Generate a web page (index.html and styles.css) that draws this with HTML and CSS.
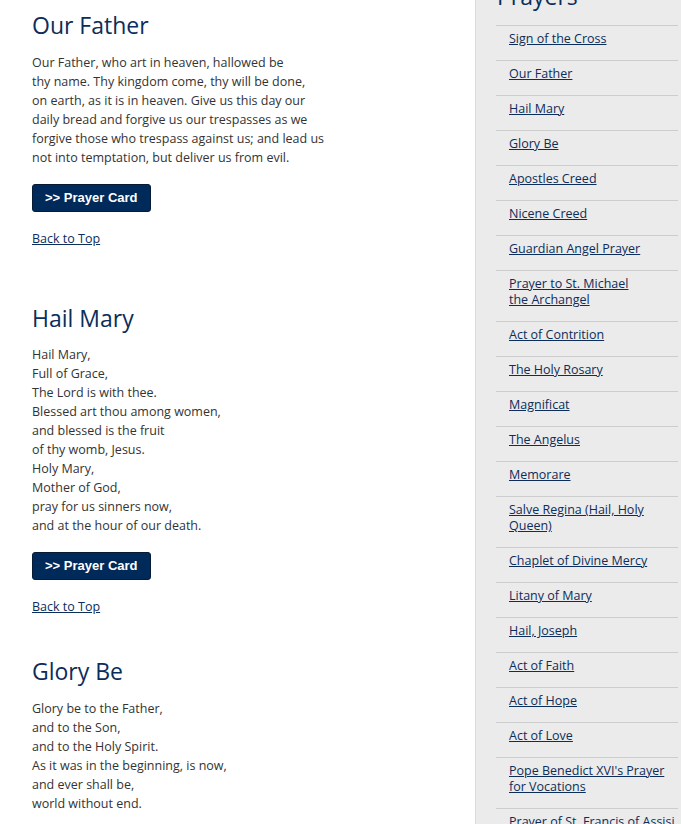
FILE: index.html
```html
<!DOCTYPE html>
<html lang="en">
<head>
  <meta charset="UTF-8">
  <title>Prayers</title>
  <link rel="stylesheet" href="styles.css">
</head>
<body>
  <div class="page">
    <div class="content">

      <div class="prayer" id="our-father">
        <h2>Our Father</h2>
        <p>Our Father, who art in heaven, hallowed be<br>
        thy name. Thy kingdom come, thy will be done,<br>
        on earth, as it is in heaven. Give us this day our<br>
        daily bread and forgive us our trespasses as we<br>
        forgive those who trespass against us; and lead us<br>
        not into temptation, but deliver us from evil.</p>
        <a class="card-btn" href="#">&gt;&gt; Prayer Card</a>
        <p class="top-link"><a href="#">Back to Top</a></p>
      </div>

      <div class="prayer prayer-wide" id="hail-mary">
        <h2>Hail Mary</h2>
        <p>Hail Mary,<br>
        Full of Grace,<br>
        The Lord is with thee.<br>
        Blessed art thou among women,<br>
        and blessed is the fruit<br>
        of thy womb, Jesus.<br>
        Holy Mary,<br>
        Mother of God,<br>
        pray for us sinners now,<br>
        and at the hour of our death.</p>
        <a class="card-btn" href="#">&gt;&gt; Prayer Card</a>
        <p class="top-link"><a href="#">Back to Top</a></p>
      </div>

      <div class="prayer" id="glory-be">
        <h2>Glory Be</h2>
        <p>Glory be to the Father,<br>
        and to the Son,<br>
        and to the Holy Spirit.<br>
        As it was in the beginning, is now,<br>
        and ever shall be,<br>
        world without end.</p>
      </div>

    </div>

    <div class="sidebar">
      <h3>Prayers</h3>
      <ul class="prayer-list">
        <li><a href="#">Sign of the Cross</a></li>
        <li><a href="#">Our Father</a></li>
        <li><a href="#">Hail Mary</a></li>
        <li><a href="#">Glory Be</a></li>
        <li><a href="#">Apostles Creed</a></li>
        <li><a href="#">Nicene Creed</a></li>
        <li><a href="#">Guardian Angel Prayer</a></li>
        <li><a href="#">Prayer to St. Michael<br>the Archangel</a></li>
        <li><a href="#">Act of Contrition</a></li>
        <li><a href="#">The Holy Rosary</a></li>
        <li><a href="#">Magnificat</a></li>
        <li><a href="#">The Angelus</a></li>
        <li><a href="#">Memorare</a></li>
        <li><a href="#">Salve Regina (Hail, Holy Queen)</a></li>
        <li><a href="#">Chaplet of Divine Mercy</a></li>
        <li><a href="#">Litany of Mary</a></li>
        <li><a href="#">Hail, Joseph</a></li>
        <li><a href="#">Act of Faith</a></li>
        <li><a href="#">Act of Hope</a></li>
        <li><a href="#">Act of Love</a></li>
        <li><a href="#">Pope Benedict XVI's Prayer for Vocations</a></li>
        <li><a href="#">Prayer of St. Francis of Assisi</a></li>
      </ul>
    </div>
  </div>
</body>
</html>
```

FILE: styles.css
```css
html {
  overflow: hidden;
}

body {
  margin: 0;
  padding: 0;
  font-family: 'Open Sans', 'Noto Sans', sans-serif;
  font-size: 12.5px;
  color: #333;
  background-color: #ffffff;
}

a {
  color: #0d2d5a;
}

.page {
  display: flex;
  align-items: flex-start;
  min-height: 100vh;
}

.content {
  flex: 0 0 443px;
  padding: 10px 0 0 32px;
}

.prayer h2 {
  margin: 0;
  font-size: 23px;
  font-weight: normal;
  line-height: 30px;
  color: #0b2d5b;
}

.prayer p {
  margin: 13px 0 0;
  line-height: 19px;
}

.card-btn {
  display: inline-block;
  margin-top: 17px;
  padding: 0 12px;
  height: 26px;
  line-height: 26px;
  border: 1px solid #071a36;
  border-radius: 3px;
  background-color: #002a5a;
  color: #ffffff;
  font-family: 'Liberation Sans', Arial, sans-serif;
  font-size: 13px;
  font-weight: bold;
  text-decoration: none;
  vertical-align: top;
}

.prayer p.top-link {
  margin: 17px 0 0;
}

.prayer {
  margin-bottom: 41px;
}

.prayer-wide {
  padding-top: 14px;
  margin-bottom: 40px;
}

.prayer-wide p {
  margin-top: 12px;
}

/* Right column list of prayers */
.sidebar {
  flex: 1;
  align-self: stretch;
  background-color: #ebebeb;
  border-left: 1px solid #dcdcdc;
  padding: 0 3px 0 20px;
}

.sidebar h3 {
  margin: -19px 0 14px;
  padding-left: 1px;
  font-size: 23px;
  font-weight: normal;
  line-height: 30px;
  color: #0b2d5b;
}

.prayer-list {
  list-style: none;
  margin: 0;
  padding: 0;
}

.prayer-list li {
  border-top: 1px solid #cdcdcd;
  padding: 5px 0 13px 13px;
  line-height: 16px;
}
```
